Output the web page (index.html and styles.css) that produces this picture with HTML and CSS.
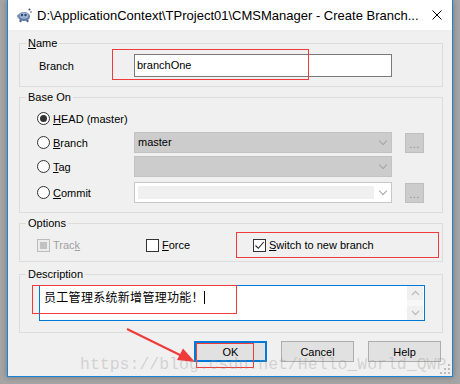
FILE: index.html
```html
<!DOCTYPE html>
<html lang="en">
<head>
    <meta charset="UTF-8">
    <meta name="viewport" content="width=device-width, initial-scale=1.0">
    <title>Create Branch</title>
    <link rel="stylesheet" href="styles.css">
</head>
<body>
    <div class="window">
        <div class="titlebar">
            <svg class="app-icon" viewBox="0 0 16 16">
                <ellipse cx="8" cy="9.5" rx="6" ry="4.5" fill="#5f7ba6"/>
                <ellipse cx="8" cy="8.5" rx="4.5" ry="3.2" fill="#9fb4d4"/>
                <circle cx="6" cy="8" r="1.2" fill="#2d4670"/>
                <circle cx="9.5" cy="8" r="1.2" fill="#2d4670"/>
                <circle cx="2.5" cy="9" r="1.6" fill="#7b93b8"/>
                <circle cx="4.5" cy="14" r="1.2" fill="#4d6690"/>
                <circle cx="11.5" cy="14" r="1.2" fill="#4d6690"/>
                <circle cx="13.5" cy="2.5" r="1" fill="#344c78"/>
                <circle cx="15" cy="5" r="0.8" fill="#344c78"/>
            </svg>
            <span class="title">D:\ApplicationContext\TProject01\CMSManager - Create Branch...</span>
            <svg class="close" viewBox="0 0 10 10">
                <path d="M0.5 0.5 L9.5 9.5 M9.5 0.5 L0.5 9.5" stroke="#000" stroke-width="1"/>
            </svg>
        </div>

        <div class="dialog">
            <div class="group">
                <div class="caption"><u>N</u>ame</div>
                <div class="row name-row">
                    <span class="field-label">Branch</span>
                    <div class="textbox">branchOne</div>
                </div>
            </div>

            <div class="group">
                <div class="caption">Base On</div>
                <div class="base-list">
                    <div class="row">
                        <span class="choice"><span class="radio checked"></span><span><u>H</u>EAD (master)</span></span>
                    </div>
                    <div class="row">
                        <span class="choice"><span class="radio"></span><span><u>B</u>ranch</span></span>
                        <div class="combo disabled">master<span class="chevron"></span></div>
                        <div class="more">...</div>
                    </div>
                    <div class="row">
                        <span class="choice"><span class="radio"></span><span><u>T</u>ag</span></span>
                        <div class="combo disabled"><span class="chevron"></span></div>
                    </div>
                    <div class="row commit-row">
                        <span class="choice"><span class="radio"></span><span><u>C</u>ommit</span></span>
                        <div class="combo empty"><span class="combo-edit"></span><span class="chevron"></span></div>
                        <div class="more">...</div>
                    </div>
                </div>
            </div>

            <div class="group group-options">
                <div class="caption">Options</div>
                <div class="row options-row">
                    <span class="check-item track"><span class="checkbox disabled"></span><span>Trac<u>k</u></span></span>
                    <span class="check-item force"><span class="checkbox"></span><span><u>F</u>orce</span></span>
                    <span class="check-item"><span class="checkbox checked">
                        <svg viewBox="0 0 11 11"><path d="M1.5 5.5 L4.3 8.3 L9.8 2" fill="none" stroke="#222" stroke-width="1.1"/></svg>
                    </span><span><u>S</u>witch to new branch</span></span>
                </div>
            </div>

            <div class="group group-desc">
                <div class="caption">Description</div>
                <div class="memo">
                    <div class="memo-text">员工管理系统新增管理功能！<span class="caret"></span></div>
                    <div class="scrollbar">
                        <span class="scroll-btn"><svg viewBox="0 0 9 6"><path d="M1 5 L4.5 1.5 L8 5" fill="none" stroke="#bdbdbd" stroke-width="1.3"/></svg></span>
                        <span class="scroll-track"></span>
                        <span class="scroll-btn"><svg viewBox="0 0 9 6"><path d="M1 1 L4.5 4.5 L8 1" fill="none" stroke="#bdbdbd" stroke-width="1.3"/></svg></span>
                    </div>
                </div>
            </div>

            <div class="buttons">
                <button class="btn default">OK</button>
                <button class="btn">Cancel</button>
                <button class="btn">Help</button>
            </div>
        </div>

        <svg class="grip" viewBox="0 0 10 10">
            <rect x="8" y="0" width="2" height="2" fill="#bcbcbc"/>
            <rect x="4" y="4" width="2" height="2" fill="#bcbcbc"/>
            <rect x="8" y="4" width="2" height="2" fill="#bcbcbc"/>
            <rect x="0" y="8" width="2" height="2" fill="#bcbcbc"/>
            <rect x="4" y="8" width="2" height="2" fill="#bcbcbc"/>
            <rect x="8" y="8" width="2" height="2" fill="#bcbcbc"/>
        </svg>
    </div>

    <!-- red marks drawn on top of the screenshot -->
    <div class="mark mark-name"></div>
    <div class="mark mark-switch"></div>
    <div class="mark mark-desc"></div>
    <div class="mark mark-ok"></div>
    <svg class="arrow" viewBox="0 0 460 384">
        <line x1="127" y1="329" x2="182" y2="356" stroke="#f03a3a" stroke-width="2"/>
        <polygon points="195,362 177,360 183,348.5" fill="#f03a3a"/>
    </svg>
    <div class="watermark">https://blog.csdn.net/Hello_World_QWP</div>
</body>
</html>
```

FILE: styles.css
```css
* {
    box-sizing: border-box;
}
body {
    margin: 0;
    background-color: #a5a5a5;
    font-family: "Liberation Sans", Arial, sans-serif;
    font-size: 11px;
    color: #000;
    height: 384px;
    overflow: hidden;
}
u {
    text-decoration: underline;
    text-underline-offset: 1px;
}
.window {
    position: relative;
    margin-left: 7px;
    width: 446px;
    height: 377px;
    border: 1px solid #1883d7;
    border-top: none;
    background-color: #f0f0f0;
    display: flex;
    flex-direction: column;
    box-shadow: 0 0 6px rgba(0, 0, 0, 0.3);
}
.titlebar {
    height: 30px;
    flex-shrink: 0;
    background-color: #fff;
    display: flex;
    align-items: center;
    padding-left: 8px;
}
.app-icon {
    width: 16px;
    height: 16px;
    margin-right: 5px;
}
.title {
    flex: 1;
    font-size: 13px;
    white-space: nowrap;
    overflow: hidden;
}
.close {
    width: 10px;
    height: 10px;
    margin: 0 10px 0 12px;
}
.dialog {
    flex: 1;
    padding: 13px 9px 0 11px;
}
.group {
    border: 1px solid #dcdcdc;
    margin-bottom: 10px;
}
.caption {
    margin: -8px 0 0 6px;
    padding: 0 2px;
    width: max-content;
    line-height: 14px;
    background-color: #f0f0f0;
}
.row {
    display: flex;
    align-items: center;
    height: 21px;
}
.name-row {
    height: 23px;
    margin: 4px 0 9px;
    padding-left: 19px;
}
.field-label {
    width: 95px;
}
.textbox {
    width: 258px;
    height: 23px;
    border: 1px solid #7a7a7a;
    background-color: #fff;
    padding-left: 2px;
    line-height: 21px;
}
.base-list {
    padding: 4px 0 9px 17px;
    display: flex;
    flex-direction: column;
    gap: 3px;
}
.commit-row {
    margin-top: 2px;
}
.choice {
    width: 97px;
    display: flex;
    align-items: center;
    gap: 3px;
}
.radio {
    width: 13px;
    height: 13px;
    border: 1px solid #333;
    border-radius: 50%;
    background-color: #fff;
    display: flex;
    align-items: center;
    justify-content: center;
}
.radio.checked::after {
    content: "";
    width: 7px;
    height: 7px;
    border-radius: 50%;
    background-color: #333;
}
.combo {
    position: relative;
    width: 258px;
    height: 21px;
    padding-left: 3px;
    line-height: 19px;
    display: flex;
    align-items: center;
}
.combo.disabled {
    background-color: #cccccc;
    border: 1px solid #c2c2c2;
}
.combo.empty {
    background-color: #fff;
    border: 1px solid #c8c8c8;
}
.combo-edit {
    width: 236px;
    height: 13px;
    background-color: #f0f0f0;
}
.chevron {
    position: absolute;
    right: 4px;
    top: 5px;
    width: 9px;
    height: 9px;
}
.chevron::before {
    content: "";
    position: absolute;
    left: 2px;
    top: 0;
    width: 5px;
    height: 5px;
    border-right: 1px solid #a4a4a4;
    border-bottom: 1px solid #a4a4a4;
    transform: rotate(45deg);
}
.more {
    width: 19px;
    height: 20px;
    margin-left: 13px;
    background-color: #cccccc;
    border: 1px solid #bfbfbf;
    color: #8c8c8c;
    text-align: center;
    line-height: 20px;
    letter-spacing: 0.5px;
}
.group-options {
    margin-bottom: 12px;
}
.options-row {
    height: 18px;
    margin: 6px 0 7px;
    padding-left: 17px;
}
.check-item {
    display: flex;
    align-items: center;
    gap: 3px;
}
.check-item.track {
    width: 109px;
    color: #a0a0a0;
}
.check-item.force {
    width: 107px;
}
.checkbox {
    width: 13px;
    height: 13px;
    border: 1px solid #333;
    background-color: #fff;
    display: flex;
}
.checkbox.disabled {
    border-color: #bcbcbc;
    background-color: #c2c2c2;
    box-shadow: inset 0 0 0 2px #ececec;
}
.checkbox svg {
    width: 11px;
    height: 11px;
}
.group-desc {
    margin-bottom: 8px;
}
.memo {
    display: flex;
    width: 386px;
    height: 36px;
    margin: 4px 0 11px 19px;
    border: 1px solid #0078d7;
    background-color: #fff;
}
.memo-text {
    flex: 1;
    padding: 2px 0 0 4px;
    font-family: "Noto Sans CJK SC", "Liberation Sans", sans-serif;
    font-size: 12px;
    letter-spacing: 0.3px;
    line-height: 18px;
    display: flex;
    align-items: center;
    align-self: flex-start;
}
.caret {
    display: inline-block;
    width: 1px;
    height: 13px;
    margin-left: 0;
    background-color: #000;
}
.scrollbar {
    width: 16px;
    margin-right: 1px;
    display: flex;
    flex-direction: column;
}
.scroll-btn {
    height: 14px;
    background-color: #f0f0f0;
    display: flex;
    align-items: center;
    justify-content: center;
}
.scroll-btn svg {
    width: 9px;
    height: 6px;
}
.scroll-track {
    flex: 1;
    background-color: #f7f7f7;
}
.buttons {
    display: flex;
    justify-content: flex-end;
    gap: 14px;
    padding-right: 2px;
}
.btn {
    width: 73px;
    height: 21px;
    padding: 0;
    border: 1px solid #adadad;
    background-color: #e1e1e1;
    font-family: "Liberation Sans", Arial, sans-serif;
    font-size: 11px;
    color: #000;
}
.btn.default {
    border: 2px solid #0078d7;
}
.grip {
    position: absolute;
    right: 2px;
    bottom: 2px;
    width: 10px;
    height: 10px;
}
.mark {
    position: absolute;
    border: 1.5px solid #ef3b3b;
}
.mark-name {
    left: 112px;
    top: 49px;
    width: 197px;
    height: 31px;
}
.mark-switch {
    left: 236px;
    top: 232px;
    width: 203px;
    height: 26px;
}
.mark-desc {
    left: 32px;
    top: 285px;
    width: 205px;
    height: 29px;
}
.mark-ok {
    left: 196px;
    top: 343px;
    width: 58px;
    height: 25px;
}
.arrow {
    position: absolute;
    left: 0;
    top: 0;
    width: 460px;
    height: 384px;
    pointer-events: none;
}
.watermark {
    position: absolute;
    left: 80px;
    top: 355px;
    font-family: "Liberation Mono", "Courier New", monospace;
    font-size: 16.5px;
    color: rgba(150, 150, 150, 0.35);
    white-space: nowrap;
    pointer-events: none;
}
```
